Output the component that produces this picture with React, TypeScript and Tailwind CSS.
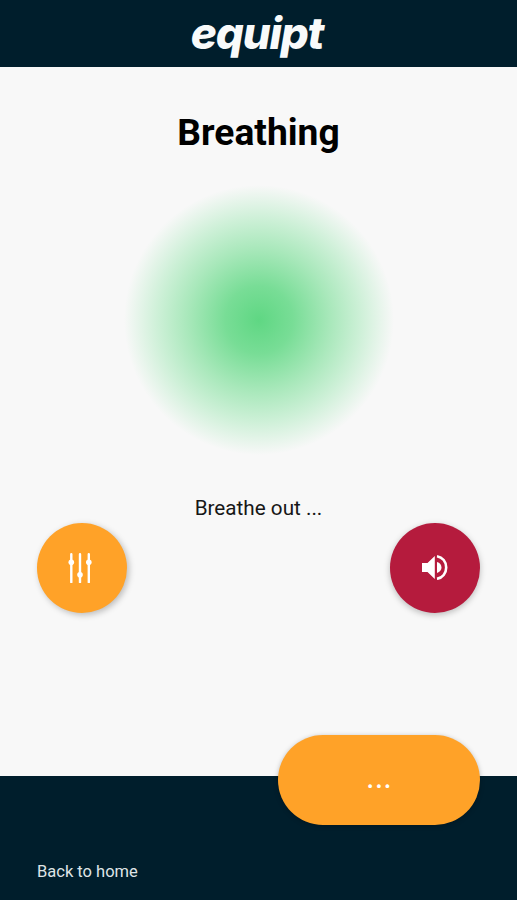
import { useState } from 'react';

function SlidersIcon() {
  return (
    <svg className="w-6 h-[30px]" fill="none" viewBox="0 0 24 30">
      <g stroke="white" strokeWidth={2.4} strokeLinecap="round">
        <path d="M3.3 1.2v28M12 1.2v28M20.8 1.2v28" />
      </g>
      <g fill="white">
        <circle cx="3.3" cy="9.3" r="2.8" />
        <circle cx="12" cy="21.8" r="2.8" />
        <circle cx="20.8" cy="9.3" r="2.8" />
      </g>
    </svg>
  );
}

function SpeakerIcon() {
  return (
    <svg className="w-[26px] h-[26px]" fill="none" viewBox="0 0 26 26">
      <path fill="white" d="M0 9h5.5L12.8 2v23l-7.3-7H0z" />
      <path fill="white" d="M15 8.1c2.9.9 4.5 2.9 4.5 5.4S17.9 18 15 18.9z" />
      <path stroke="white" strokeWidth={2.6} d="M15 2.2C20.6 3.1 24.2 7.8 24.2 13.5S20.6 23.9 15 24.8" />
    </svg>
  );
}

export default function App() {
  const [muted, setMuted] = useState(false);

  return (
    <div className="h-[900px] w-full flex flex-col bg-[#f8f8f8] font-['Roboto',sans-serif] overflow-hidden">
      {/* Header */}
      <header className="h-[67px] shrink-0 flex justify-center bg-[#001e2c] pr-[3px]">
        <span className="font-['Inter',sans-serif] font-extrabold italic text-[44px] leading-[66px] tracking-[-1.2px] text-[#f8fafa]">
          equipt
        </span>
      </header>

      <main className="flex-1 flex flex-col items-center">
        <h1 className="mt-[41px] text-[37.2px] leading-[48px] font-bold text-black">Breathing</h1>

        {/* Breathing circle */}
        <div className="mt-[29px] w-[270px] h-[270px] rounded-full bg-[radial-gradient(closest-side,#5fd783_0%,#78dd96_25%,#a9e8bb_53%,#cdf0d7_75%,#f8f8f8_100%)]" />

        <p className="mt-[39px] text-[20.7px] leading-7 text-[#171717]">Breathe out ...</p>

        {/* Controls */}
        <div className="mt-px w-full px-[37px] flex justify-between">
          <button
            className="w-[90px] h-[90px] rounded-full bg-[#ffa228] shadow-[2px_2px_6px_rgba(0,0,0,0.25)] flex items-center justify-center pr-1"
            aria-label="Settings"
          >
            <SlidersIcon />
          </button>
          <button
            onClick={() => setMuted(!muted)}
            className="w-[90px] h-[90px] rounded-full bg-[#b51b3d] shadow-[0_2px_6px_rgba(0,0,0,0.25)] flex items-center justify-center pb-[3px]"
            aria-label="Sound"
            aria-pressed={muted}
          >
            <SpeakerIcon />
          </button>
        </div>
      </main>

      {/* Footer */}
      <footer className="h-[124px] shrink-0 px-[37px] pb-[18px] flex items-end justify-between bg-[#001e2c]">
        <a href="#" className="text-[16.5px] leading-5 text-[#dfe4e6]">Back to home</a>
        <button className="self-start -mt-[41px] w-[202px] h-[90px] rounded-full bg-[#ffa228] shadow-[0_1px_5px_rgba(0,0,0,0.25)] text-white text-[33px] leading-[84px] pb-1.5">
          ...
        </button>
      </footer>
    </div>
  );
}
